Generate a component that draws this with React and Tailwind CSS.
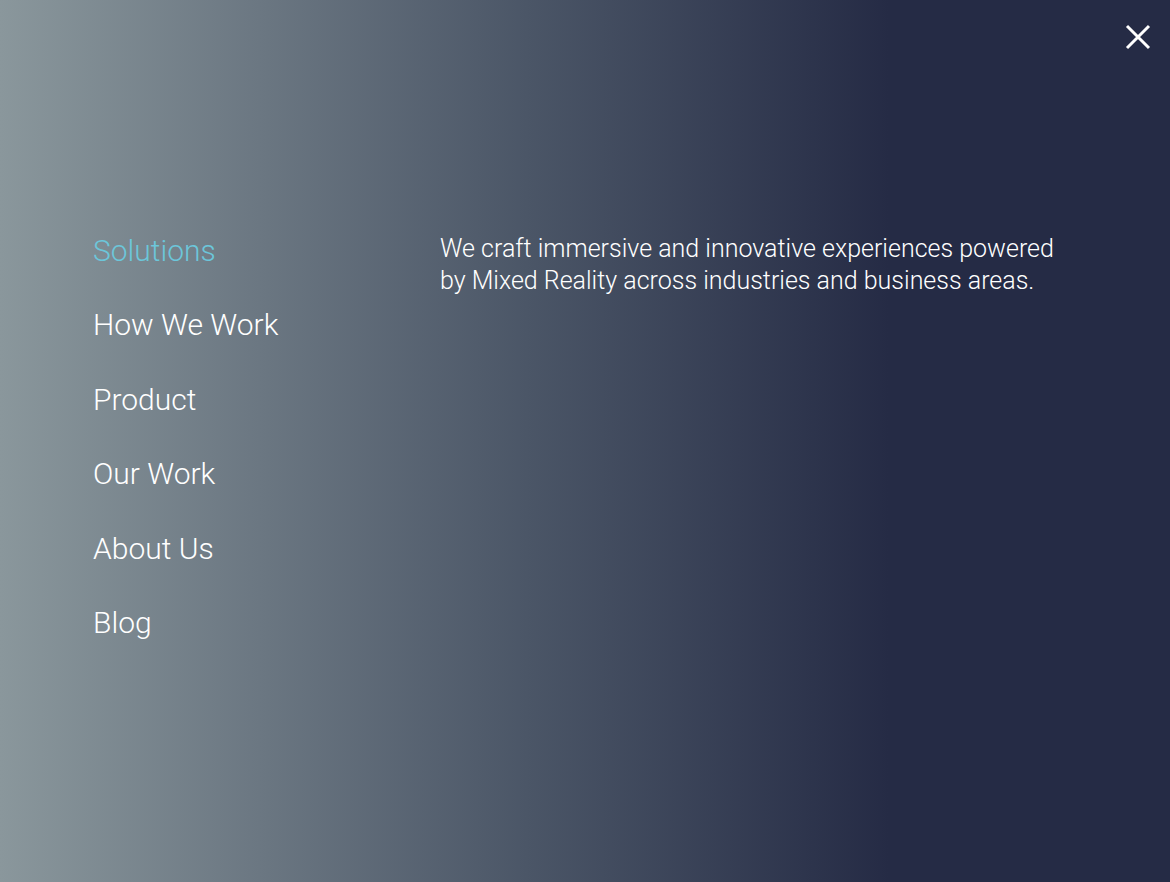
import React from 'react';

const links = ['Solutions', 'How We Work', 'Product', 'Our Work', 'About Us', 'Blog'];

const App = () => {
  return (
    <div
      className="relative w-full h-[882px] overflow-hidden bg-[linear-gradient(90deg,#8a979c_0%,#4b5667_45%,#252b45_76%,#252b45_100%)]"
      style={{ fontFamily: 'Roboto, "Liberation Sans", sans-serif' }}
    >
      <button className="absolute top-[24px] right-[19px] w-[26px] h-[26px] text-white" aria-label="Close">
        <svg viewBox="0 0 26 26" width="26" height="26" fill="none" stroke="currentColor" strokeWidth="3">
          <path d="M2 2 L24 24 M24 2 L2 24" />
        </svg>
      </button>

      <div className="flex pt-[233px] pl-[93px]">
        <nav className="flex flex-col gap-[38.4px] w-[347px]">
          {links.map((l, i) => (
            <a
              key={l}
              href="#"
              className={`text-[30px] leading-[36px] font-light ${i === 0 ? 'text-[#6cc6da]' : 'text-white'}`}
            >
              {l}
            </a>
          ))}
        </nav>
        <p className="w-[630px] text-[25px] leading-[32px] font-light text-white">
          We craft immersive and innovative experiences powered by Mixed Reality across industries and business areas.
        </p>
      </div>
    </div>
  );
};

export default App;
